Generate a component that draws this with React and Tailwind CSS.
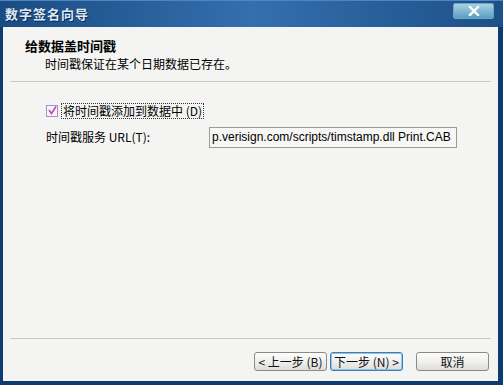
import React from "react";

const cjk = { fontFamily: '"Noto Sans CJK SC", "Liberation Sans", sans-serif' };

const Button = ({ children, focused }) => (
  <button
    className={`h-[19px] w-[73px] rounded-[3px] border text-[12px] leading-none text-[#111] bg-gradient-to-b from-[#fdfdfd] via-[#f0f0ee] to-[#dcdcd8] ${
      focused ? "border-[#3c7fb1] shadow-[inset_0_0_0_1px_#8fc3e8]" : "border-[#8a8a86]"
    }`}
    style={cjk}
  >
    {children}
  </button>
);

export default function App() {
  return (
    <div className="w-[503px] h-[385px] flex flex-col bg-[#0f3c70]" style={cjk}>
      {/* title bar */}
      <div className="h-[27px] flex items-center justify-between pl-[5px] pr-[9px] bg-gradient-to-r from-[#1a4c84] via-[#3470ad] to-[#1d5089] border-t border-[#4d86c0]">
        <span className="text-[13px] font-bold text-[#dfe8f3] tracking-[1px] [text-shadow:1px_1px_0_#0b2a4f]">
          数字签名向导
        </span>
        <div className="w-[41px] h-[16px] mb-[6px] rounded-[2px] border border-[#6fa6c6] bg-gradient-to-b from-[#a8d2e4] to-[#5a9fc0] flex items-center justify-center">
          <svg width="12" height="10" viewBox="0 0 12 10">
            <path d="M2 1 L10 9 M10 1 L2 9" stroke="#fff" strokeWidth="2.4" strokeLinecap="square" />
          </svg>
        </div>
      </div>

      {/* body */}
      <div className="flex-1 flex flex-col bg-[#f4f4f2] ml-[3px] mr-[5px] mb-[4px]">
        <div className="h-[54px] pt-[11px] pl-[22px]">
          <div className="text-[13px] font-bold leading-[16px] text-black">给数据盖时间戳</div>
          <div className="text-[12px] leading-[16px] pl-[20px] mt-[2px] text-black">
            时间戳保证在某个日期数据已存在。
          </div>
        </div>
        <div className="mx-[7px] h-[2px] border-t border-[#c8c8c4] border-b-white" />

        <div className="flex-1 pl-[43px] pt-[20px]">
          <div className="flex items-center gap-[3px] h-[15px]">
            <div className="w-[12px] h-[12px] border border-[#b48cc8] bg-[#fbf2fb] flex items-center justify-center">
              <svg width="9" height="9" viewBox="0 0 9 9">
                <path d="M1 4 L3.5 7.5 L8 0.5" stroke="#b050b8" strokeWidth="1.6" fill="none" />
              </svg>
            </div>
            <span className="text-[12px] leading-[14px] px-[1px] border border-dotted border-[#333] text-black">
              将时间戳添加到数据中 (D)
            </span>
          </div>
          <div className="flex items-center mt-[8px] h-[22px]">
            <span className="w-[163px] text-[12px] text-black">时间戳服务 URL(T):</span>
            <div
              className="w-[248px] h-[21px] border border-[#9a9a96] bg-[#f7f7f5] flex items-center pl-[2px] text-[12px] text-black overflow-hidden whitespace-nowrap"
              style={{ fontFamily: '"Liberation Sans", Arial, sans-serif' }}
            >
              p.verisign.com/scripts/timstamp.dll Print.CAB
            </div>
          </div>
        </div>

        <div className="mx-[7px] h-[2px] border-t border-[#c8c8c4] border-b-white" />
        <div className="h-[41px] flex items-start justify-end pt-[12px] pr-[9px]">
          <Button>&lt; 上一步 (B)</Button>
          <div className="w-[3px]" />
          <Button focused>下一步 (N) &gt;</Button>
          <div className="w-[13px]" />
          <Button>取消</Button>
        </div>
      </div>
    </div>
  );
}
